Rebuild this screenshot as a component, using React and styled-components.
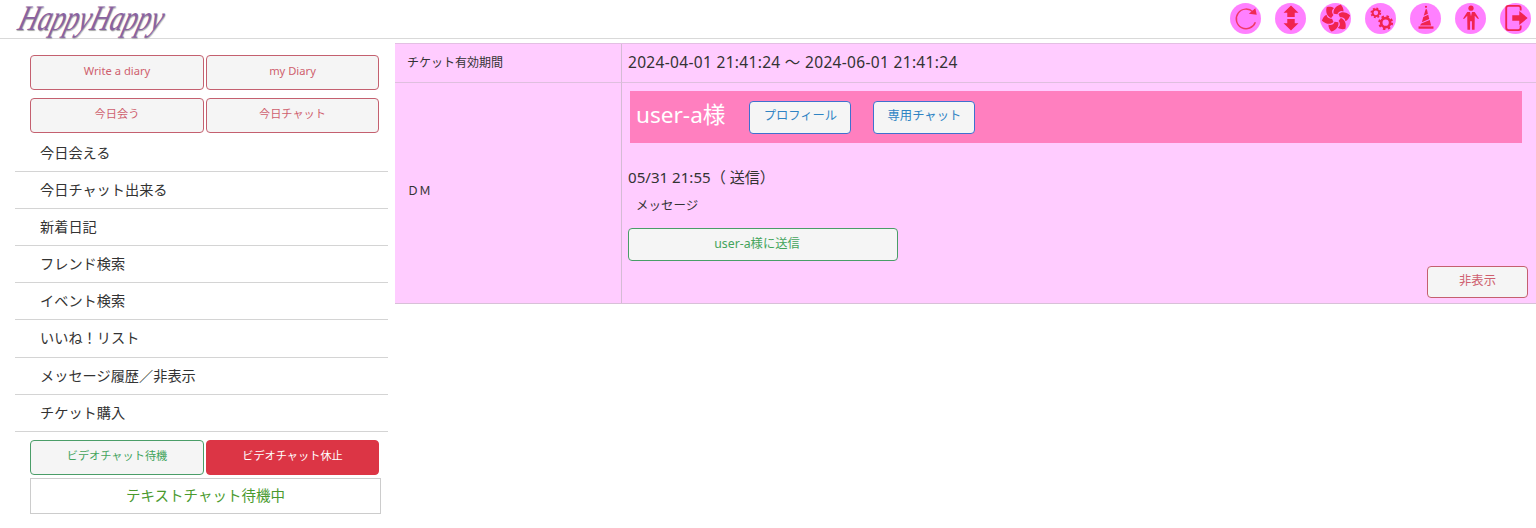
import styled, { createGlobalStyle } from "styled-components"

const GlobalStyle = createGlobalStyle`
  * { box-sizing: border-box; }
  body {
    margin: 0;
    background: #fff;
    color: #333;
    font-family: "Noto Sans", "Noto Sans CJK JP", sans-serif;
  }
`

const menuItems = [
  "今日会える",
  "今日チャット出来る",
  "新着日記",
  "フレンド検索",
  "イベント検索",
  "いいね！リスト",
  "メッセージ履歴／非表示",
  "チケット購入",
]

const toneColors = {
  red: { line: "#c4606f", text: "#cf5f6e", bg: "#f5f5f5" },
  green: { line: "#4a9d68", text: "#43a45c", bg: "#f5f5f5" },
  blue: { line: "#3f70cf", text: "#2f84c4", bg: "#f5f5f5" },
  solid: { line: "#dc3545", text: "#fff", bg: "#dc3545" },
}

function RotateIcon() {
  return (
    <svg viewBox="0 0 30 30">
      <path d="M22.5 8.5A10.5 10.5 0 1 0 25 19.5" fill="none" stroke="#ef3a68" strokeWidth="1.6" />
      <path d="M18 10.5 26.5 11.5 25 4.5z" fill="#ef2a55" />
    </svg>
  )
}

function ArrowsIcon() {
  return (
    <svg viewBox="0 0 30 30" fill="#f0244f">
      <path d="M15 1.5 23 9.5H19V14H11V9.5H7z" />
      <path d="M15 28.5 23 20.5H19V16H11V20.5H7z" />
    </svg>
  )
}

function PinwheelIcon() {
  return (
    <svg viewBox="0 0 30 30" fill="#f0244f">
      {[0, 60, 120, 180, 240, 300].map((angle) => (
        <path
          key={angle}
          d="M12.5 10.5C11.5 6.5 14.5 2 20 .5 21.5 2 23.5 5 23 8 20.5 6.5 17.5 8 16.5 11z"
          transform={`rotate(${angle} 15 15)`}
        />
      ))}
    </svg>
  )
}

function Gear({ x, y, r }) {
  return (
    <g fill="none" stroke="#f0244f">
      <circle cx={x} cy={y} r={r} strokeWidth={r * 0.6} />
      <circle
        cx={x}
        cy={y}
        r={r * 1.4}
        strokeWidth={r * 0.5}
        strokeDasharray={`${r * 0.55} ${r * 0.55}`}
      />
    </g>
  )
}

function GearsIcon() {
  return (
    <svg viewBox="0 0 30 30">
      <Gear x={9.5} y={9.5} r={3.5} />
      <Gear x={20} y={20} r={4.8} />
    </svg>
  )
}

function HatIcon() {
  return (
    <svg viewBox="0 0 30 30" fill="#f0244f">
      <circle cx="15" cy="3" r="1.2" />
      <path d="M14.6 5.5 16 5.5 17 10.5 12.6 12.5z" />
      <path d="M12.1 14 17.4 11.6 18.5 16 10.6 19.5z" />
      <path d="M10 21 19 17.2 20.5 23H8.5z" />
      <path d="M7 24H23V26.5H7z" />
    </svg>
  )
}

function PersonIcon() {
  return (
    <svg viewBox="0 0 30 30" fill="#f0244f">
      <circle cx="15" cy="4.5" r="2.8" />
      <path d="M11 8.5H14L15 13 16 8.5H19L23.5 15.5 22.5 16.2 19 12.5V17.5L18.8 27.5H16V18.5H14V27.5H11.2L11 17.5V12.5L7.5 16.2 6.5 15.5z" />
    </svg>
  )
}

function ExitIcon() {
  return (
    <svg viewBox="0 0 30 30">
      <path d="M20 7V4.5Q20 2 17.5 2H7Q4.5 2 4.5 4.5V25.5Q4.5 28 7 28H17.5Q20 28 20 25.5V23" fill="none" stroke="#f0244f" strokeWidth="2" />
      <path d="M11 12H18.5V7.5L27.5 15 18.5 22.5V18H11z" fill="#f0244f" />
    </svg>
  )
}

const headerIcons = [RotateIcon, ArrowsIcon, PinwheelIcon, GearsIcon, HatIcon, PersonIcon, ExitIcon]

export default function App() {
  return (
    <>
      <GlobalStyle />
      <Header>
        <Logo>HappyHappy</Logo>
        <IconBar>
          {headerIcons.map((Icon, i) => (
            <IconCircle key={i}>
              <Icon />
            </IconCircle>
          ))}
        </IconBar>
      </Header>

      <Page>
        <Sidebar>
          <ButtonPair>
            <Button $tone="red">Write a diary</Button>
            <Button $tone="red">my Diary</Button>
          </ButtonPair>
          <ButtonPair>
            <Button $tone="red">今日会う</Button>
            <Button $tone="red">今日チャット</Button>
          </ButtonPair>

          <Menu>
            {menuItems.map((item) => (
              <MenuItem key={item}>{item}</MenuItem>
            ))}
          </Menu>

          <ButtonPair>
            <Button $tone="green">ビデオチャット待機</Button>
            <Button $tone="solid">ビデオチャット休止</Button>
          </ButtonPair>
          <StatusBox>テキストチャット待機中</StatusBox>
        </Sidebar>

        <Table>
          <LabelCell>チケット有効期間</LabelCell>
          <ValueCell>2024-04-01 21:41:24 ～ 2024-06-01 21:41:24</ValueCell>
          <LabelCell $last>ＤＭ</LabelCell>
          <DmCell>
            <UserBar>
              <UserName>user-a様</UserName>
              <ProfileButton $tone="blue">プロフィール</ProfileButton>
              <ProfileButton $tone="blue">専用チャット</ProfileButton>
            </UserBar>
            <MessageDate>05/31 21:55（ 送信）</MessageDate>
            <MessageText>メッセージ</MessageText>
            <SendButton $tone="green">user-a様に送信</SendButton>
            <HideButton $tone="red">非表示</HideButton>
          </DmCell>
        </Table>
      </Page>
    </>
  )
}

const Header = styled.header`
  display: flex;
  align-items: center;
  justify-content: space-between;
  height: 39px;
  padding: 0 5px 2px 17px;
  border-bottom: 1px solid #d9d9d9;
`
const Logo = styled.div`
  font-family: "Liberation Serif", serif;
  font-style: italic;
  font-size: 36px;
  line-height: 36px;
  color: #8a62a0;
  transform-origin: left center;
  transform: skewX(-16deg) scaleX(0.75);
  margin-left: 3px;
  text-shadow: 1px 1px 1px #a8a8a8;
`
const IconBar = styled.div`
  display: flex;
  gap: 14px;
`
const IconCircle = styled.div`
  width: 31px;
  height: 31px;
  padding: 1.5px;
  border-radius: 50%;
  background: #ff80ff;

  svg {
    display: block;
    width: 28px;
    height: 28px;
  }
`
const Page = styled.div`
  display: flex;
  align-items: flex-start;
  padding-top: 4px;
`
const Sidebar = styled.aside`
  flex: 0 0 395px;
  padding: 12px 7px 0 15px;
`
const ButtonPair = styled.div`
  display: grid;
  grid-template-columns: 174px 173px;
  gap: 2px;
  margin: 0 0 8.5px 15px;
`
const Button = styled.button`
  height: 34.5px;
  padding: 0 0 4px;
  border: 1px solid ${(props) => toneColors[props.$tone].line};
  border-radius: 4px;
  background: ${(props) => toneColors[props.$tone].bg};
  color: ${(props) => toneColors[props.$tone].text};
  font-family: inherit;
  font-size: 11.2px;
`
const Menu = styled.ul`
  list-style: none;
  margin: -6.5px 0 8px;
  padding: 0;
`
const MenuItem = styled.li`
  height: 37.2px;
  padding-left: 25px;
  border-bottom: 1px solid #d4d4d4;
  font-size: 14.2px;
  line-height: 36px;
`
const StatusBox = styled.div`
  width: 351px;
  height: 36px;
  margin: -4.8px 0 0 15px;
  border: 1px solid #ccc;
  color: #4a9a2e;
  font-size: 14.5px;
  line-height: 33px;
  text-align: center;
`
const Table = styled.section`
  flex: 1;
  display: grid;
  grid-template-columns: 227px 1fr;
  grid-template-rows: 39px 220px;
  background: #ffccff;
  border-top: 1px solid #e3bfe3;
  border-bottom: 1px solid #d8c0d8;
`
const LabelCell = styled.div`
  display: flex;
  align-items: center;
  padding: 0 0 ${(props) => (props.$last ? "6px" : "3px")} 12px;
  border-right: 1px solid #d4bcd4;
  border-bottom: ${(props) => (props.$last ? "none" : "1px solid #dfbfdf")};
  font-size: 12px;
`
const ValueCell = styled.div`
  display: flex;
  align-items: center;
  padding: 0 0 3px 6px;
  border-bottom: 1px solid #dfbfdf;
  font-size: 15.5px;
  letter-spacing: 0.32px;
`
const DmCell = styled.div`
  position: relative;
  padding: 8px 6px 0;
`
const UserBar = styled.div`
  display: flex;
  align-items: center;
  height: 52px;
  margin: 0 8px 0 2px;
  padding-left: 6px;
  background: #ff7fbf;
`
const UserName = styled.span`
  margin: -8px 24px 0 0;
  color: #fff;
  font-size: 22.6px;
`
const ProfileButton = styled(Button)`
  width: 102px;
  height: 33px;
  margin-right: 22px;
  font-size: 12.3px;
`
const MessageDate = styled.div`
  margin-top: 23px;
  font-size: 15.1px;
  line-height: 22px;
`
const MessageText = styled.div`
  margin: 8px 0 0 8px;
  font-size: 12.5px;
  line-height: 20px;
`
const SendButton = styled(Button)`
  display: block;
  width: 270px;
  height: 33px;
  margin-top: 12px;
  padding-right: 12px;
  font-size: 12.3px;
`
const HideButton = styled(Button)`
  position: absolute;
  right: 8px;
  bottom: 5px;
  width: 101px;
  height: 32px;
  font-size: 12.3px;
`
